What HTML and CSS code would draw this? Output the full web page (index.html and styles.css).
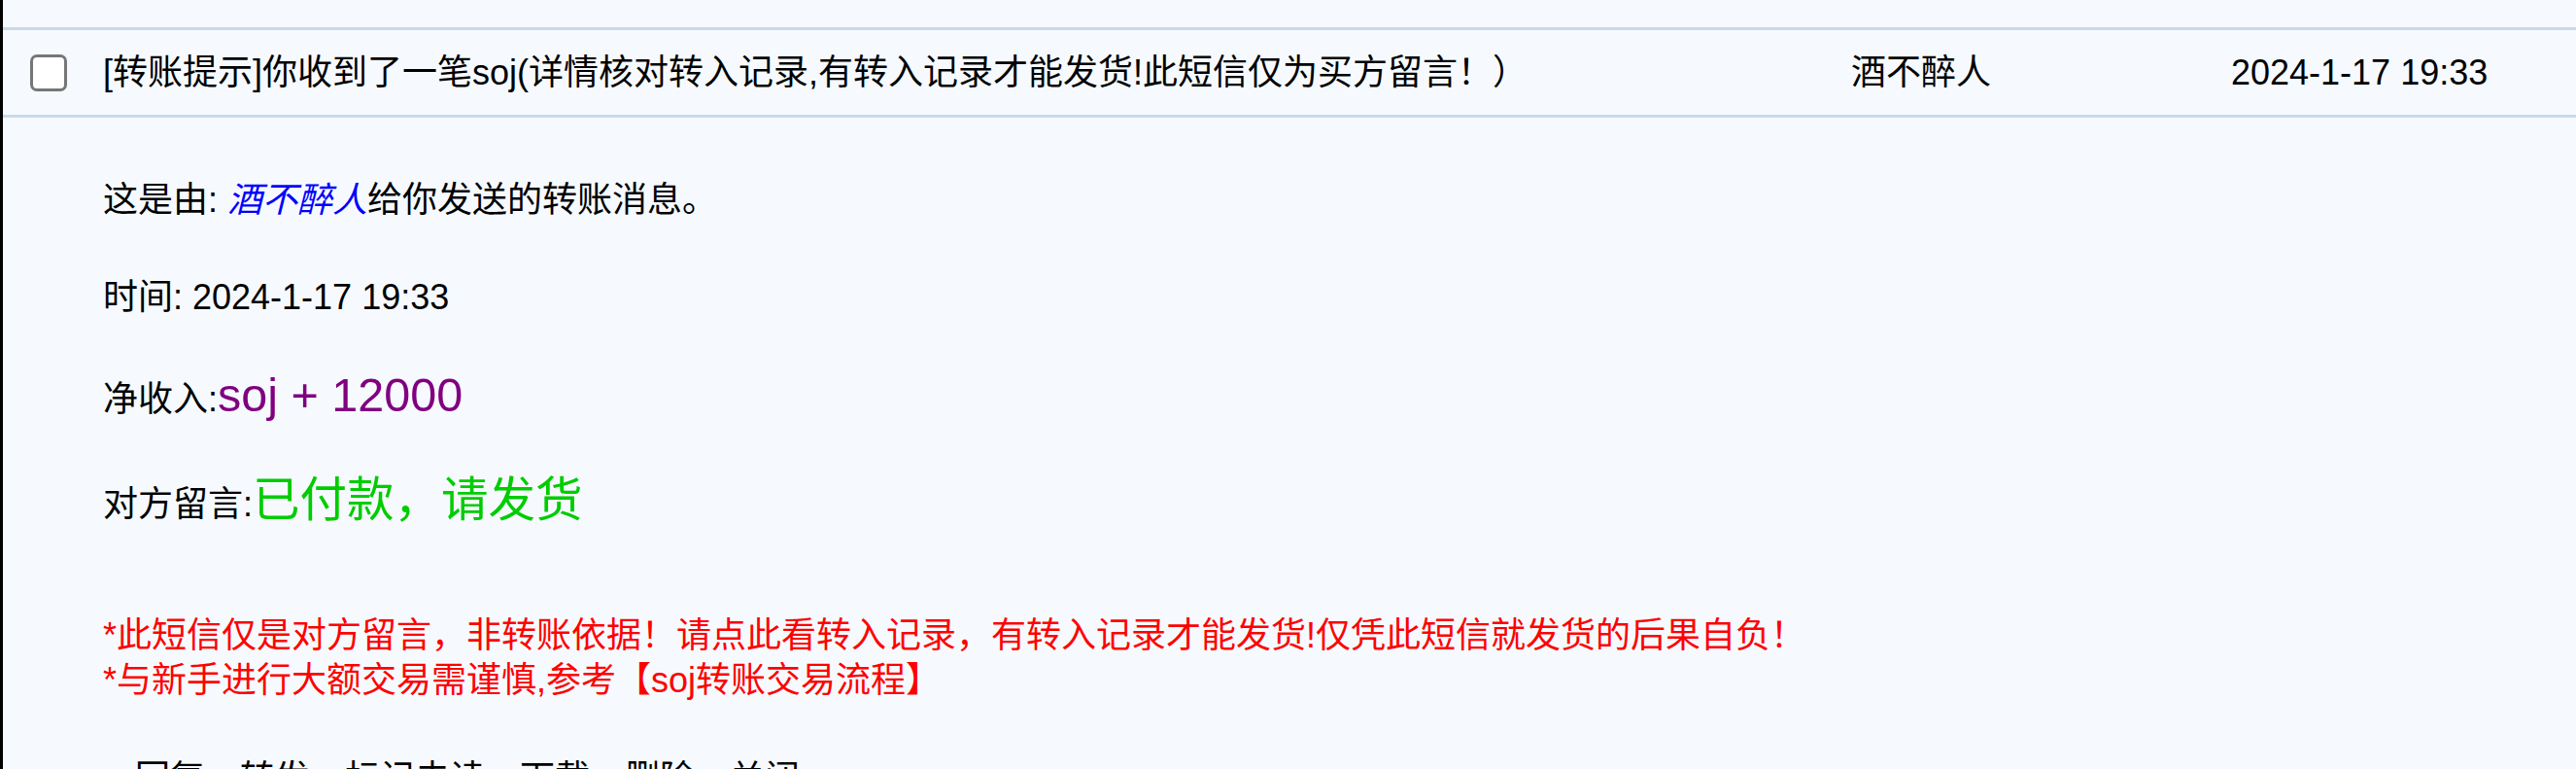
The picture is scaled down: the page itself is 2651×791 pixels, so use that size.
FILE: index.html
```html
<!DOCTYPE html>
<html lang="zh-CN">
  <head>
    <meta charset="UTF-8" />
    <title>短信 - 转账提示</title>
    <link rel="stylesheet" href="styles.css">
  </head>
  <body>
    <div class="inbox">
      <!-- row above, scrolled mostly out of view -->
      <div class="row row-prev">
        <input type="checkbox" class="pick" />
        <span class="subject">[系统提示]soj 账户安全提醒：请勿泄露密码及验证码(官方不会以任何理由索要你的密码信息)</span>
        <span class="sender">系统消息</span>
        <span class="date"></span>
      </div>
      <div class="row">
        <input type="checkbox" class="pick" />
        <span class="subject">[转账提示]你收到了一笔soj(详情核对转入记录,有转入记录才能发货!此短信仅为买方留言！）</span>
        <span class="sender">酒不醉人</span>
        <span class="date">2024-1-17 19:33</span>
      </div>
    </div>

    <div class="message">
      <div class="line">这是由: <a class="from" href="#">酒不醉人</a>给你发送的转账消息。</div>
      <div class="line gap">时间: 2024-1-17 19:33</div>
      <div class="line gap">净收入:<span class="amount">soj + 12000</span></div>
      <div class="line gap note-line">对方留言:<span class="note">已付款，请发货</span></div>
      <div class="warning">
        *此短信仅是对方留言，非转账依据！请点此看转入记录，有转入记录才能发货!仅凭此短信就发货的后果自负！<br />
        *与新手进行大额交易需谨慎,参考【soj转账交易流程】
      </div>
      <div class="actions">
        <a href="#">回复</a>
        <a href="#">转发</a>
        <a href="#">标记未读</a>
        <a href="#">下载</a>
        <a href="#">删除</a>
        <a href="#">关闭</a>
      </div>
    </div>
  </body>
</html>
```

FILE: styles.css
```css
body {
  margin: 0;
  border-left: 3px solid #000;
  min-height: 100vh;
  background-color: #f6faff;
  color: #000;
  font-family: "Liberation Sans", "Noto Sans CJK SC", sans-serif;
  font-size: 36px;
  line-height: 46px;
  overflow: hidden;
}
.inbox {
  margin-top: -70px;
}
.row {
  display: grid;
  grid-template-columns: 75px 1799px 391px 1fr;
  align-items: center;
  height: 87px;
  padding-left: 28px;
  border-bottom: 3px solid #c9d9e9;
}
.row-prev {
  height: 98px;
}
.pick {
  appearance: none;
  width: 38px;
  height: 38px;
  margin: 0;
  border: 3px solid #767676;
  border-radius: 7px;
  background-color: #fff;
  box-sizing: border-box;
}
.subject,
.sender,
.date {
  white-space: nowrap;
}
.message {
  padding: 62px 0 0 103px;
}
.line.gap {
  margin-top: 54px;
}
.line.note-line {
  margin-top: 57px;
}
.from {
  color: #0000ff;
  font-style: italic;
  text-decoration: none;
}
.amount {
  color: #800080;
  font-size: 48.5px;
}
.note {
  color: #00cc00;
  font-size: 48.5px;
}
.warning {
  margin-top: 89px;
  color: #ff0000;
}
.actions {
  display: flex;
  gap: 36px;
  margin-top: 55px;
  padding-left: 33px;
}
.actions a {
  color: #000;
  text-decoration: none;
}
```
